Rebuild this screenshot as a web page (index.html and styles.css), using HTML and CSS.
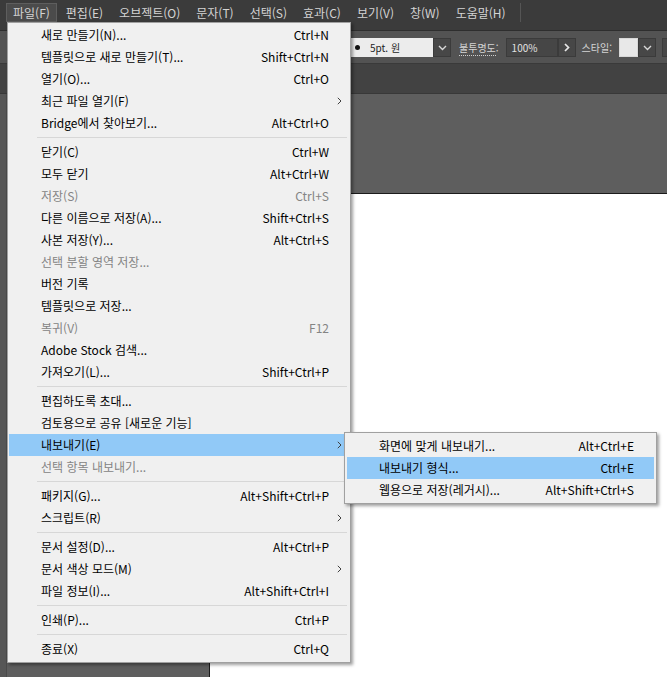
FILE: index.html
```html
<!DOCTYPE html>
<html lang="ko">
<head>
<meta charset="utf-8">
<title>Illustrator 파일 메뉴</title>
<link rel="stylesheet" href="styles.css">
</head>
<body>
<div class="app">
  <div class="menubar">
    <div class="mb-item active">파일(F)</div>
    <div class="mb-item">편집(E)</div>
    <div class="mb-item">오브젝트(O)</div>
    <div class="mb-item">문자(T)</div>
    <div class="mb-item">선택(S)</div>
    <div class="mb-item">효과(C)</div>
    <div class="mb-item">보기(V)</div>
    <div class="mb-item">창(W)</div>
    <div class="mb-item">도움말(H)</div>
    <div class="mb-sep"></div>
  </div>
  <div class="toolbar">
    <div class="stroke"><span class="dot"></span><span class="stroke-text">5pt. 원</span></div>
    <div class="tb-btn"><svg width="9" height="6" viewBox="0 0 9 6"><polyline points="1,1 4.5,4.5 8,1" fill="none" stroke="#d8d8d8" stroke-width="1.4"/></svg></div>
    <div class="tb-label"><span class="dotted">불투명도</span>:</div>
    <div class="tb-input">100%</div>
    <div class="tb-btn"><svg width="6" height="9" viewBox="0 0 6 9"><polyline points="1,1 4.5,4.5 1,8" fill="none" stroke="#e8e8e8" stroke-width="1.7"/></svg></div>
    <div class="tb-label tb-label-style">스타일:</div>
    <div class="swatch"></div>
    <div class="tb-btn"><svg width="9" height="6" viewBox="0 0 9 6"><polyline points="1,1 4.5,4.5 8,1" fill="none" stroke="#d8d8d8" stroke-width="1.4"/></svg></div>
    <div class="tb-more"></div>
  </div>
  <div class="tabbar"></div>
  <div class="workspace">
    <div class="tools"></div>
    <div class="canvas">
      <div class="doc"></div>
    </div>
  </div>
</div>

<div class="menu main-menu">
  <div class="row"><span class="label">새로 만들기(N)...</span><span class="key">Ctrl+N</span><span class="arr"></span></div>
  <div class="row"><span class="label">템플릿으로 새로 만들기(T)...</span><span class="key">Shift+Ctrl+N</span><span class="arr"></span></div>
  <div class="row"><span class="label">열기(O)...</span><span class="key">Ctrl+O</span><span class="arr"></span></div>
  <div class="row"><span class="label">최근 파일 열기(F)</span><span class="key"></span><span class="arr"><svg width="5" height="8" viewBox="0 0 5 8"><polyline points="0.8,0.8 4,4 0.8,7.2" fill="none" stroke="#404040" stroke-width="1"/></svg></span></div>
  <div class="row"><span class="label">Bridge에서 찾아보기...</span><span class="key">Alt+Ctrl+O</span><span class="arr"></span></div>
  <div class="sep"></div>
  <div class="row"><span class="label">닫기(C)</span><span class="key">Ctrl+W</span><span class="arr"></span></div>
  <div class="row"><span class="label">모두 닫기</span><span class="key">Alt+Ctrl+W</span><span class="arr"></span></div>
  <div class="row disabled"><span class="label">저장(S)</span><span class="key">Ctrl+S</span><span class="arr"></span></div>
  <div class="row"><span class="label">다른 이름으로 저장(A)...</span><span class="key">Shift+Ctrl+S</span><span class="arr"></span></div>
  <div class="row"><span class="label">사본 저장(Y)...</span><span class="key">Alt+Ctrl+S</span><span class="arr"></span></div>
  <div class="row disabled"><span class="label">선택 분할 영역 저장...</span><span class="key"></span><span class="arr"></span></div>
  <div class="row"><span class="label">버전 기록</span><span class="key"></span><span class="arr"></span></div>
  <div class="row"><span class="label">템플릿으로 저장...</span><span class="key"></span><span class="arr"></span></div>
  <div class="row disabled"><span class="label">복귀(V)</span><span class="key">F12</span><span class="arr"></span></div>
  <div class="row"><span class="label">Adobe Stock 검색...</span><span class="key"></span><span class="arr"></span></div>
  <div class="row"><span class="label">가져오기(L)...</span><span class="key">Shift+Ctrl+P</span><span class="arr"></span></div>
  <div class="sep"></div>
  <div class="row"><span class="label">편집하도록 초대...</span><span class="key"></span><span class="arr"></span></div>
  <div class="row"><span class="label">검토용으로 공유 [새로운 기능]</span><span class="key"></span><span class="arr"></span></div>
  <div class="row hl"><span class="label">내보내기(E)</span><span class="key"></span><span class="arr"><svg width="5" height="8" viewBox="0 0 5 8"><polyline points="0.8,0.8 4,4 0.8,7.2" fill="none" stroke="#404040" stroke-width="1"/></svg></span></div>
  <div class="row disabled"><span class="label">선택 항목 내보내기...</span><span class="key"></span><span class="arr"></span></div>
  <div class="sep"></div>
  <div class="row"><span class="label">패키지(G)...</span><span class="key">Alt+Shift+Ctrl+P</span><span class="arr"></span></div>
  <div class="row"><span class="label">스크립트(R)</span><span class="key"></span><span class="arr"><svg width="5" height="8" viewBox="0 0 5 8"><polyline points="0.8,0.8 4,4 0.8,7.2" fill="none" stroke="#404040" stroke-width="1"/></svg></span></div>
  <div class="sep"></div>
  <div class="row"><span class="label">문서 설정(D)...</span><span class="key">Alt+Ctrl+P</span><span class="arr"></span></div>
  <div class="row"><span class="label">문서 색상 모드(M)</span><span class="key"></span><span class="arr"><svg width="5" height="8" viewBox="0 0 5 8"><polyline points="0.8,0.8 4,4 0.8,7.2" fill="none" stroke="#404040" stroke-width="1"/></svg></span></div>
  <div class="row"><span class="label">파일 정보(I)...</span><span class="key">Alt+Shift+Ctrl+I</span><span class="arr"></span></div>
  <div class="sep"></div>
  <div class="row"><span class="label">인쇄(P)...</span><span class="key">Ctrl+P</span><span class="arr"></span></div>
  <div class="sep"></div>
  <div class="row"><span class="label">종료(X)</span><span class="key">Ctrl+Q</span><span class="arr"></span></div>
</div>

<div class="menu sub-menu">
  <div class="row"><span class="label">화면에 맞게 내보내기...</span><span class="key">Alt+Ctrl+E</span><span class="arr"></span></div>
  <div class="row hl"><span class="label">내보내기 형식...</span><span class="key">Ctrl+E</span><span class="arr"></span></div>
  <div class="row"><span class="label">웹용으로 저장(레거시)...</span><span class="key">Alt+Shift+Ctrl+S</span><span class="arr"></span></div>
</div>
</body>
</html>
```

FILE: styles.css
```css
html, body {
  margin: 0;
  padding: 0;
}

body {
  width: 667px;
  height: 677px;
  overflow: hidden;
  position: relative;
  background: #5e5e5e;
  font-family: "Noto Sans CJK KR", "Noto Sans", sans-serif;
  font-size: 12px;
}

.app {
  display: flex;
  flex-direction: column;
  height: 677px;
}

/* ---------- menu bar ---------- */
.menubar {
  box-sizing: border-box;
  height: 31px;
  flex: none;
  background: #3b3b3b;
  border-bottom: 1px solid #2e2e2e;
  display: flex;
  align-items: flex-start;
  gap: 2px;
  padding: 3px 0 0 6px;
}

.mb-item {
  box-sizing: border-box;
  flex: none;
  height: 19px;
  line-height: 17px;
  padding: 0 6px;
  border: 1px solid transparent;
  color: #d4d4d4;
  font-size: 12px;
  white-space: nowrap;
}

.mb-item.active {
  background: #4b4b4b;
  border-color: #5e5e5e;
}

.mb-sep {
  flex: none;
  width: 1px;
  height: 19px;
  margin-left: 5px;
  background: #555555;
}

/* ---------- control toolbar ---------- */
.toolbar {
  box-sizing: border-box;
  height: 33px;
  flex: none;
  background: #535353;
  border-bottom: 1px solid #3a3a3a;
  display: flex;
  align-items: flex-start;
  padding: 7px 0 0 350px;
  overflow: hidden;
  font-size: 10px;
}

.toolbar > * {
  flex: none;
}

.stroke {
  box-sizing: border-box;
  width: 83px;
  height: 19px;
  background: #ececec;
  display: flex;
  align-items: center;
  padding-left: 5px;
  color: #1c1c1c;
}

.dot {
  width: 5px;
  height: 5px;
  border-radius: 50%;
  background: #111111;
}

.stroke-text {
  margin-left: 10px;
  line-height: 19px;
}

.tb-btn {
  box-sizing: border-box;
  width: 18px;
  height: 19px;
  background: #474747;
  border: 1px solid #3b3b3b;
  display: flex;
  align-items: center;
  justify-content: center;
}

.tb-label {
  margin-left: 8px;
  line-height: 19px;
  color: #d4d4d4;
  white-space: nowrap;
}

.tb-label-style {
  margin-left: 6px;
}

.dotted {
  border-bottom: 1px dotted #cfcfcf;
}

.tb-input {
  box-sizing: border-box;
  width: 52px;
  height: 19px;
  margin-left: 7px;
  background: #464646;
  border: 1px solid #3b3b3b;
  color: #e2e2e2;
  line-height: 17px;
  padding-left: 5px;
}

.swatch {
  box-sizing: border-box;
  width: 19px;
  height: 19px;
  margin-left: 7px;
  background: #e8e8e8;
  border: 1px solid #d8d8d8;
}

.tb-more {
  box-sizing: border-box;
  width: 20px;
  height: 19px;
  margin-left: 6px;
  background: #474747;
  border: 1px solid #3b3b3b;
}

/* ---------- tab bar + workspace ---------- */
.tabbar {
  box-sizing: border-box;
  height: 30px;
  flex: none;
  background: #424242;
  border-bottom: 1px solid #383838;
}

.workspace {
  flex: 1;
  display: flex;
}

.tools {
  width: 6px;
  background: #565656;
  border-right: 1px solid #4a4a4a;
}

.canvas {
  flex: 1;
  display: flex;
  padding: 99px 0 0 202px;
  background: #5e5e5e;
}

.doc {
  flex: 1;
  background: #ffffff;
  border-top: 1px solid #1b1b1b;
  border-left: 1px solid #1b1b1b;
}

/* ---------- dropdown menus ---------- */
.menu {
  position: absolute;
  box-sizing: border-box;
  background: #f0f0f0;
  border: 1px solid #a0a0a0;
  box-shadow: 2px 2px 3px rgba(0, 0, 0, 0.38);
  color: #000000;
  font-size: 12px;
}

.main-menu {
  left: 7px;
  top: 22px;
  width: 344px;
  padding: 1px 1px 2px 1px;
}

.sub-menu {
  left: 344px;
  top: 432px;
  width: 313px;
  padding: 2px;
}

.row {
  display: flex;
  align-items: center;
  height: 22px;
  line-height: 22px;
  padding-left: 32px;
  white-space: nowrap;
}

.row .label {
  flex: 1;
}

.row .key {
  text-align: right;
}

.row .arr {
  width: 20px;
  height: 22px;
  display: flex;
  align-items: center;
  justify-content: center;
}

.row.disabled {
  color: #848484;
}

.row.hl {
  background: #91c9f7;
}

.sep {
  height: 7px;
  display: flex;
  align-items: center;
  margin: 0 2px 0 28px;
}

.sep::before {
  content: "";
  flex: 1;
  height: 1px;
  background: #d7d7d7;
}
```
